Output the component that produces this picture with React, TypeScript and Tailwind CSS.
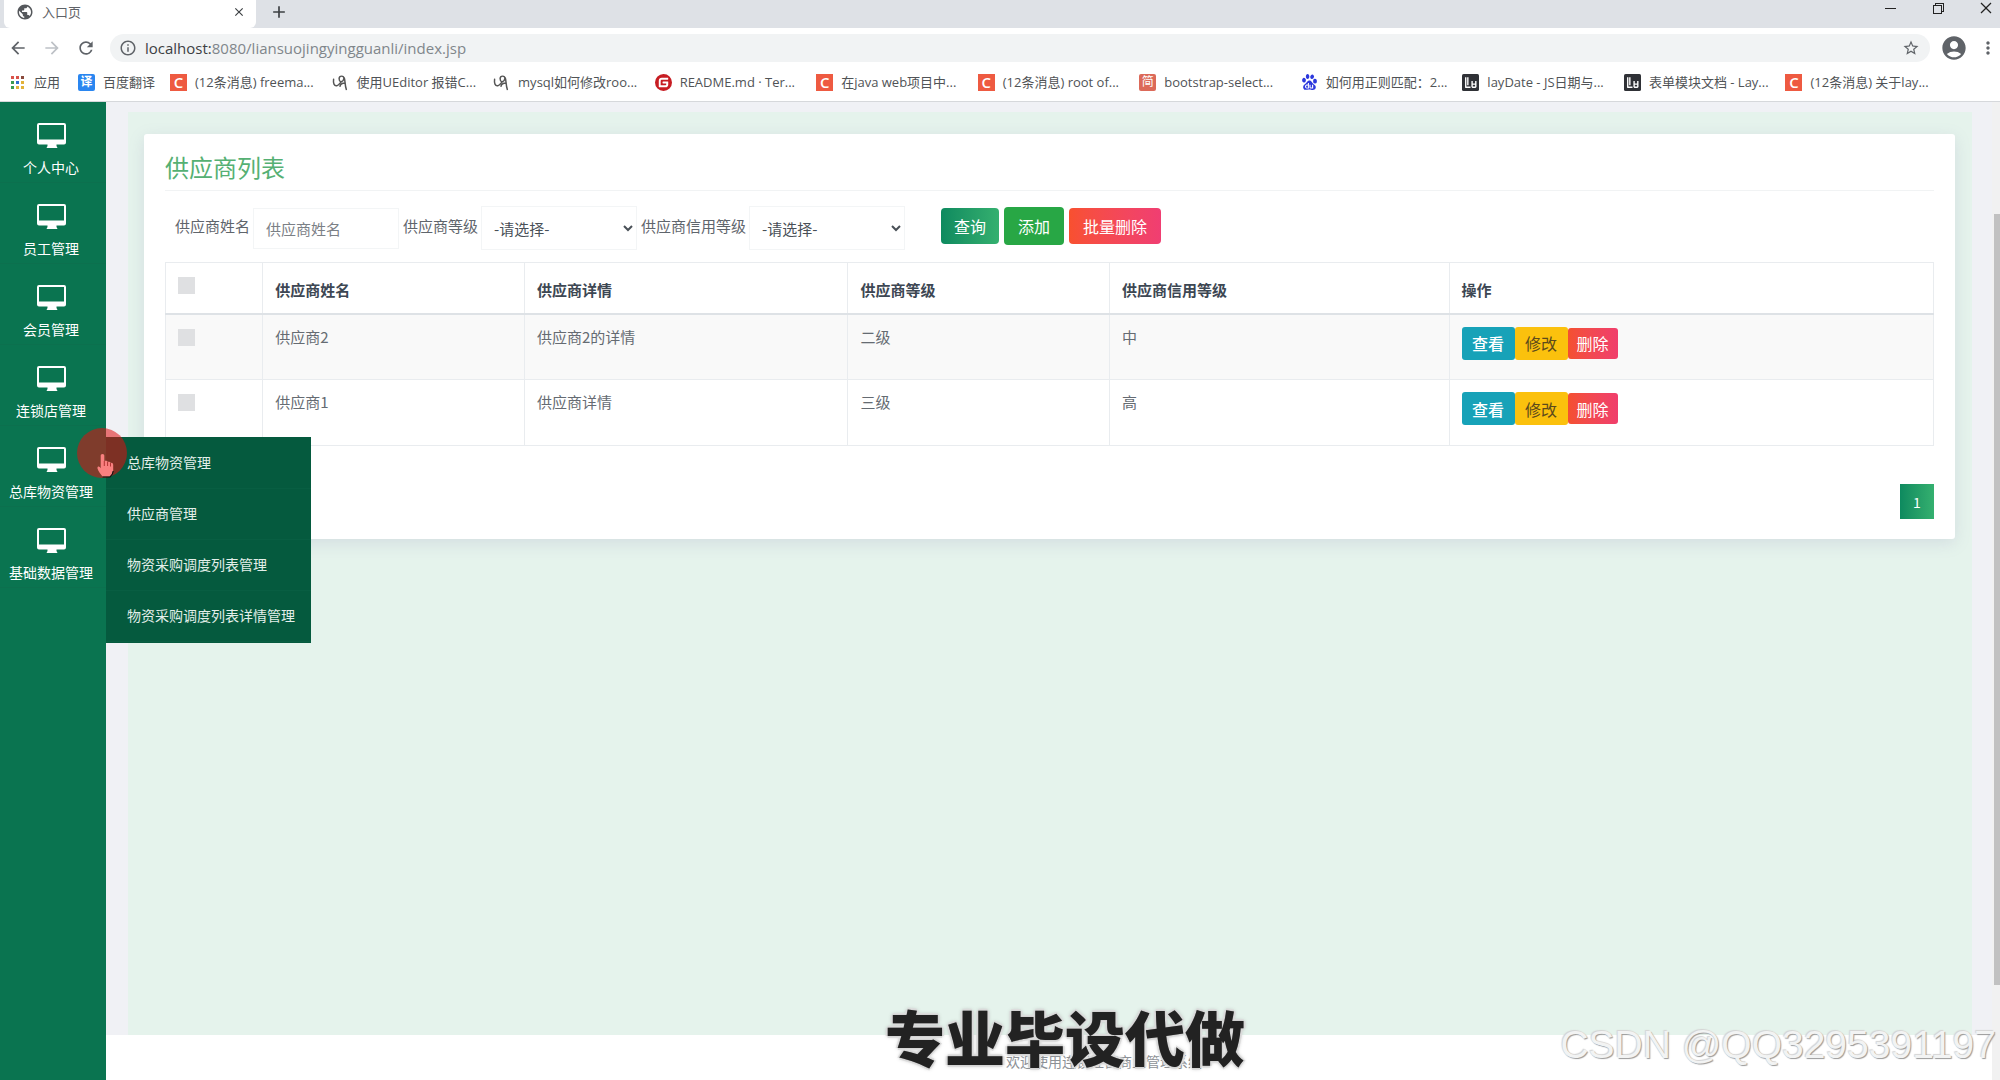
import type { ReactNode } from "react";
import {
  MdAccountCircle,
  MdAdd,
  MdArrowBack,
  MdArrowForward,
  MdClose,
  MdInfoOutline,
  MdMoreVert,
  MdPublic,
  MdRefresh,
  MdStarBorder,
} from "react-icons/md";
import { SiBaidu, SiGitee } from "react-icons/si";
import {
  VscChromeClose,
  VscChromeMinimize,
  VscChromeRestore,
} from "react-icons/vsc";

type Favicon = "csdn" | "ue" | "gitee" | "jian" | "baidu" | "layui";

const BOOKMARKS: { icon: Favicon; title: string }[] = [
  { icon: "csdn", title: "(12条消息) freema..." },
  { icon: "ue", title: "使用UEditor 报错C..." },
  { icon: "ue", title: "mysql如何修改roo..." },
  { icon: "gitee", title: "README.md · Ter..." },
  { icon: "csdn", title: "在java web项目中..." },
  { icon: "csdn", title: "(12条消息) root of..." },
  { icon: "jian", title: "bootstrap-select..." },
  { icon: "baidu", title: "如何用正则匹配：2..." },
  { icon: "layui", title: "layDate - JS日期与..." },
  { icon: "layui", title: "表单模块文档 - Lay..." },
  { icon: "csdn", title: "(12条消息) 关于lay..." },
];

const MENU = [
  "个人中心",
  "员工管理",
  "会员管理",
  "连锁店管理",
  "总库物资管理",
  "基础数据管理",
];

const SUBMENU = [
  "总库物资管理",
  "供应商管理",
  "物资采购调度列表管理",
  "物资采购调度列表详情管理",
];

const SUPPLIERS = [
  { id: 2, name: "供应商2", detail: "供应商2的详情", level: "二级", credit: "中" },
  { id: 1, name: "供应商1", detail: "供应商详情", level: "三级", credit: "高" },
];

const APP_DOTS = [
  "#d9534a", "#d9534a", "#8a4a3c",
  "#3d9a50", "#2f6fd0", "#e2b23a",
  "#3d9a50", "#e2b23a", "#e2b23a",
];

const cellCls = "border border-[#e9ecef] px-3 text-left";
const selectCls =
  "h-11 border border-[#f3f5f6] bg-white px-2 text-[15px] text-[#495057] outline-none";
const checkboxCls =
  "block h-[17px] w-[17px] appearance-none bg-[#dfe0e2] checked:bg-[#0d8a5f]";

function FaviconMark({ icon }: { icon: Favicon }) {
  if (icon === "csdn") {
    return (
      <span className="flex h-[17px] w-[17px] shrink-0 items-center justify-center bg-[#ee5a41] text-[15px] leading-4 font-semibold text-white">
        C
      </span>
    );
  }
  if (icon === "gitee") return <SiGitee className="h-[17px] w-[17px] shrink-0 text-[#c71d23]" />;
  if (icon === "baidu") return <SiBaidu className="h-4 w-[17px] shrink-0 text-[#2c38dd]" />;
  if (icon === "jian") {
    return (
      <span className="flex h-[17px] w-[17px] shrink-0 items-center justify-center rounded-xs bg-[#dc6a59] text-[12px] leading-4 text-white">
        简
      </span>
    );
  }
  if (icon === "layui") {
    return (
      <svg viewBox="0 0 16 16" className="h-[17px] w-[17px] shrink-0">
        <rect width="16" height="16" rx="1.5" fill="#2f3136" />
        <path
          d="M3.500 3v9.500M5.500 3v7.500M3 12.500h5M9.500 6.500v6M9.500 9.500h3.500M13 6.500v6M9.500 12.500H13"
          stroke="#fff"
          strokeWidth="1.3"
          fill="none"
        />
      </svg>
    );
  }
  return (
    <svg viewBox="0 0 16 16" className="h-[17px] w-[17px] shrink-0">
      <path
        d="M1.500 5C1 8.500 2 11.500 4.500 11C6.500 10.500 7 9 8.500 7.500M8.500 7.500C6 6.500 6 2 9 2S12 6 8.500 7.500M11.500 3.500C12.500 6 12 10.500 13.500 14.500M12 8.500C10 8.500 8 9.500 7.500 11.500"
        stroke="#555"
        strokeWidth="1.4"
        fill="none"
        strokeLinecap="round"
      />
    </svg>
  );
}

function BrowserChrome() {
  return (
    <header className="shrink-0 border-b border-[#d6d8db] bg-white font-['Open_Sans','Noto_Sans_CJK_SC',sans-serif] text-[#5f6368]">
      <div className="flex h-7 bg-[#dee1e6] pl-1">
        <div className="flex w-[252px] items-center rounded-b-md bg-white pr-[10px] pb-1 pl-3">
          <MdPublic className="h-[18px] w-[18px] text-[#55585c]" />
          <span className="ml-2 flex-1 text-[13px] leading-5">入口页</span>
          <button aria-label="关闭标签页">
            <MdClose className="h-[14px] w-[14px] text-[#3c4043]" />
          </button>
        </div>
        <button aria-label="新标签页" className="ml-[13px] pb-1">
          <MdAdd className="h-5 w-5 text-[#3c4043]" />
        </button>
        <div className="ml-auto flex items-start gap-8 pr-[6px] text-[#222]">
          <button aria-label="最小化">
            <VscChromeMinimize className="h-4 w-4" />
          </button>
          <button aria-label="还原">
            <VscChromeRestore className="h-4 w-4" />
          </button>
          <button aria-label="关闭">
            <VscChromeClose className="h-4 w-4" />
          </button>
        </div>
      </div>

      <div className="flex h-10 items-center pr-[2px] pl-2">
        <button aria-label="后退">
          <MdArrowBack className="h-5 w-5" />
        </button>
        <button aria-label="前进" className="ml-[14px]">
          <MdArrowForward className="h-5 w-5 text-[#bdc1c6]" />
        </button>
        <button aria-label="刷新" className="ml-[14px]">
          <MdRefresh className="h-5 w-5" />
        </button>
        <div className="ml-[14px] flex h-7 flex-1 items-center rounded-full bg-[#f1f3f4] pr-[10px] pl-[9px]">
          <MdInfoOutline className="h-[18px] w-[18px]" />
          <span className="ml-2 flex-1 text-[15px] leading-5 text-[#80868b]">
            <span className="text-[#3c4043]">localhost:</span>
            8080/liansuojingyingguanli/index.jsp
          </span>
          <MdStarBorder className="h-[18px] w-[18px]" />
        </div>
        <MdAccountCircle className="ml-[10px] h-7 w-7" />
        <MdMoreVert className="ml-[10px] h-5 w-5" />
      </div>

      <nav className="flex h-[33px] items-start pt-1 pl-[11px] text-[13px] leading-5 text-[#505356]">
        <a href="#" className="flex w-[67px] items-center gap-[10px]">
          <span className="grid grid-cols-3 gap-[2px]">
            {APP_DOTS.map((c, i) => (
              <span key={i} className="h-[3px] w-[3px]" style={{ background: c }} />
            ))}
          </span>
          应用
        </a>
        <a href="#" className="flex w-[92px] items-center gap-2">
          <span className="flex h-[17px] w-[17px] items-center justify-center rounded-xs bg-[#2a86f0] text-[12px] font-bold text-white">
            译
          </span>
          百度翻译
        </a>
        <div className="mr-[53px] grid flex-1 grid-cols-11">
          {BOOKMARKS.map((b) => (
            <a key={b.title} href="#" className="flex items-center gap-2 whitespace-nowrap">
              <FaviconMark icon={b.icon} />
              {b.title}
            </a>
          ))}
        </div>
      </nav>
    </header>
  );
}

function MonitorIcon() {
  return (
    <svg viewBox="0 0 29 25" className="h-[25px] w-[29px]">
      <path
        fill="#fff"
        fillRule="evenodd"
        d="M2 0h25a2 2 0 0 1 2 2v17.500a2 2 0 0 1-2 2h-7.500v1.500l1 2h-11l1-2v-1.500H2a2 2 0 0 1-2-2V2a2 2 0 0 1 2-2zm0 2v14.500h25V2z"
      />
    </svg>
  );
}

function Sidebar() {
  return (
    <aside className="w-[106px] shrink-0 bg-[#0a7450] text-[14px] leading-5 text-white">
      {MENU.map((m, i) => (
        <div key={m} className="relative h-[81px] border-b border-[#0c704e]">
          <a href="#" className="flex flex-col items-center pt-[21px] pr-1">
            <MonitorIcon />
            <span className="mt-[9px] whitespace-nowrap">{m}</span>
          </a>
          {i === 4 && (
            <>
              <ul className="absolute top-[11px] left-full z-10 w-[205px] bg-[#055a3e] py-px">
                {SUBMENU.map((s) => (
                  <li key={s} className="border-b border-[#085e42]">
                    <a href="#" className="block h-[50px] pl-[21px] leading-[48px] text-[#e3efea]">
                      {s}
                    </a>
                  </li>
                ))}
              </ul>
              <Pointer />
            </>
          )}
        </div>
      ))}
    </aside>
  );
}

// 鼠标点击高亮
function Pointer() {
  return (
    <svg
      viewBox="0 0 50 54"
      className="pointer-events-none absolute top-[2px] left-[77px] z-20 h-[54px] w-[50px]"
    >
      <circle cx="25" cy="25" r="25" fill="#e00f0f" fillOpacity="0.55" />
      <path
        d="M25.500 26c1.200 0 1.800.8 1.800 1.800v5.200c2-.6 3 0 3.300.8 1.600-.4 2.600.2 2.900 1 1.700-.3 2.700.6 2.700 2.200v5.500c0 3-2 5-3.200 6h-7.500c-1.500-2-4.500-5.500-5-8-.3-2 1.200-2.500 2.200-1.400l1 1.200V27.800c0-1 .6-1.800 1.800-1.800z"
        fill="#f98080"
      />
      <path d="M27.300 33v5M30.600 34v4M33.500 35v3.500" stroke="#b23434" strokeWidth="1" />
      <path d="M25.500 49h7.500c1.200-1 3-3 3.200-6" stroke="#111" strokeWidth="1.200" fill="none" />
    </svg>
  );
}

function FormButton({ className, children }: { className: string; children: ReactNode }) {
  return (
    <button className={`rounded-[4px] text-[16px] text-white ${className}`}>
      {children}
    </button>
  );
}

function SearchForm() {
  return (
    <form className="mt-[15px] flex items-center pl-[10px]" onSubmit={(e) => e.preventDefault()}>
      <label htmlFor="name" className="pb-1">
        供应商姓名
      </label>
      <input
        id="name"
        placeholder="供应商姓名"
        className="ml-[3px] h-[41px] w-[146px] border border-[#f3f5f6] px-3 text-[15px] outline-none placeholder:text-[#7b8086]"
      />
      <label htmlFor="level" className="ml-1 pb-1">
        供应商等级
      </label>
      <select id="level" className={`ml-[3px] w-[156px] ${selectCls}`}>
        <option>-请选择-</option>
      </select>
      <label htmlFor="credit" className="ml-1 pb-1">
        供应商信用等级
      </label>
      <select id="credit" className={`ml-[3px] w-[156px] ${selectCls}`}>
        <option>-请选择-</option>
      </select>
      <div className="ml-9 flex items-center gap-[5px] pb-1">
        <FormButton className="h-9 bg-linear-to-r from-[#0d8a5f] to-[#34b06f] px-[13px]">
          查询
        </FormButton>
        <FormButton className="h-[38px] bg-[#28a745] px-[14px]">添加</FormButton>
        <FormButton className="h-9 bg-linear-to-r from-[#f8502f] to-[#f03e72] px-[14px]">
          批量删除
        </FormButton>
      </div>
    </form>
  );
}

function SupplierTable() {
  return (
    <table className="mt-3 w-full table-fixed border-collapse">
      <colgroup>
        <col className="w-[5.5%]" />
        <col className="w-[14.8%]" />
        <col className="w-[18.3%]" />
        <col className="w-[14.8%]" />
        <col className="w-[19.2%]" />
        <col />
      </colgroup>
      <thead>
        <tr className="h-[51px] border-b-2 border-[#dee2e6] text-[#3d4753]">
          <th className={`${cellCls} pt-[14px] align-top`}>
            <input type="checkbox" aria-label="全选" className={checkboxCls} />
          </th>
          {["供应商姓名", "供应商详情", "供应商等级", "供应商信用等级", "操作"].map((h) => (
            <th key={h} className={`${cellCls} pt-1 font-bold`}>
              {h}
            </th>
          ))}
        </tr>
      </thead>
      <tbody className="text-[#656b72]">
        {SUPPLIERS.map((s) => (
          <tr key={s.id} className="h-[66px] align-top odd:bg-[#f9f9f9]">
            <td className={`${cellCls} pt-[14px]`}>
              <input type="checkbox" aria-label={s.name} className={checkboxCls} />
            </td>
            <td className={`${cellCls} pt-[10px]`}>{s.name}</td>
            <td className={`${cellCls} pt-[10px]`}>{s.detail}</td>
            <td className={`${cellCls} pt-[10px]`}>{s.level}</td>
            <td className={`${cellCls} pt-[10px]`}>{s.credit}</td>
            <td className={`${cellCls} pt-3`}>
              <div className="flex items-center text-[16px] leading-5 text-white">
                <button className="h-[33px] w-[53px] rounded-[3px] bg-[#17a2b8] font-medium">
                  查看
                </button>
                <button className="h-[33px] w-[53px] rounded-[3px] bg-[#fbc10d] text-[#5c4a1c]">
                  修改
                </button>
                <button className="h-[31px] w-[50px] rounded-[3px] bg-linear-to-r from-[#f4502f] to-[#f03e6c]">
                  删除
                </button>
              </div>
            </td>
          </tr>
        ))}
      </tbody>
    </table>
  );
}

export default function App() {
  return (
    <div className="relative flex h-screen flex-col overflow-hidden font-['Noto_Sans_CJK_SC',sans-serif] text-[15px] leading-6 text-[#5f656c]">
      <BrowserChrome />
      <div className="flex min-h-0 flex-1">
        <Sidebar />
        <div className="flex min-w-0 flex-1 flex-col bg-[#f0f1f5]">
          <main className="mt-[10px] mr-5 ml-[22px] flex-1 bg-[#e5f3ec] pt-[22px] pr-[17px] pl-4">
            <section className="rounded-[3px] bg-white px-[21px] pt-[17px] pb-5 shadow-[0_4px_16px_rgba(130,120,170,0.18)]">
              <h1 className="border-b border-[#f1f3f4] pb-[7px] text-[24px] leading-8 text-[#55b073]">
                供应商列表
              </h1>
              <SearchForm />
              <SupplierTable />
              <nav className="mt-[38px] flex justify-end">
                <button className="h-[35px] w-[34px] bg-linear-to-r from-[#0d8a5f] to-[#34b06f] text-[14px] text-white">
                  1
                </button>
              </nav>
            </section>
          </main>
          <footer className="h-[45px] bg-white pt-[14px] pl-[110px] text-center text-[14px] text-[#8d9196]">
            欢迎使用连锁经营商业管理系统
          </footer>
        </div>
        <div className="flex w-2 shrink-0 flex-col items-end bg-[#f1f1f1] pt-28 pb-[95px]">
          <div className="w-[6px] flex-1 bg-[#c1c1c1]" />
        </div>
      </div>

      <p className="absolute inset-x-0 bottom-0 pl-[130px] text-center text-[60px] leading-[88px] font-black text-[#222] [text-shadow:0_0_1px_#888,2px_0_0_#ddd,-2px_0_0_#ddd,0_2px_0_#ddd,0_-2px_0_#ddd,0_0_4px_#999]">
        专业毕设代做
      </p>
      <p className="absolute right-1 bottom-0 font-['Liberation_Sans',sans-serif] text-[39px] leading-[70px] text-[#f2f3f3] [text-shadow:1px_1px_1px_#999,-1px_-1px_1px_#d4d4d4]">
        CSDN @QQ3295391197
      </p>
    </div>
  );
}
